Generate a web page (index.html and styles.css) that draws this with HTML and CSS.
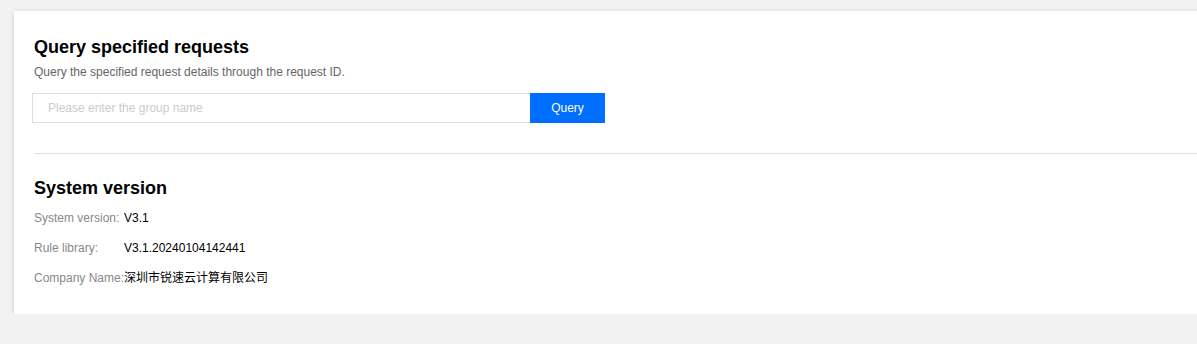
FILE: index.html
```html
<!DOCTYPE html>
<html lang="en">
<head>
    <meta name="viewport" content="width=device-width, initial-scale=1.0">
    <title>System Info</title>
    <link rel="stylesheet" href="styles.css">
</head>
<body>
    <div class="card">
        <div class="section query-section">
            <h2 class="title">Query specified requests</h2>
            <p class="desc">Query the specified request details through the request ID.</p>
            <div class="search">
                <input type="text" class="search-input" placeholder="Please enter the group name">
                <button class="search-btn">Query</button>
            </div>
        </div>
        <div class="section version-section">
            <h2 class="title">System version</h2>
            <div class="info-row">
                <span class="label">System version:</span>
                <span class="value">V3.1</span>
            </div>
            <div class="info-row">
                <span class="label">Rule library:</span>
                <span class="value">V3.1.20240104142441</span>
            </div>
            <div class="info-row">
                <span class="label">Company Name:</span>
                <span class="value">深圳市锐速云计算有限公司</span>
            </div>
        </div>
    </div>
</body>
</html>
```

FILE: styles.css
```css
body {
    margin: 0;
    padding: 11px 0 0 14px;
    background-color: #f2f2f2;
    font-family: "Liberation Sans", Arial, "Noto Sans CJK SC", sans-serif;
    color: #000;
    overflow: hidden;
}
.card {
    background: #fff;
    margin-right: -40px;
    padding: 21px 20px 21px 20px;
    box-shadow: 0 1px 5px rgba(0, 0, 0, 0.14);
}
.title {
    margin: 0;
    font-size: 18px;
    line-height: 30px;
    font-weight: bold;
    color: #000;
}
.desc {
    margin: 0 0 11px 0;
    font-size: 12px;
    line-height: 20px;
    color: #666;
}
.query-section {
    padding-bottom: 30px;
    border-bottom: 1px solid #e0e0e0;
}
.search {
    display: flex;
    margin-left: -2px;
}
.search-input {
    width: 498px;
    height: 30px;
    box-sizing: border-box;
    border: 1px solid #ddd;
    border-right: none;
    padding: 0 15px;
    font-family: inherit;
    font-size: 12px;
    outline: none;
}
.search-input::placeholder {
    color: #ccc;
}
.search-btn {
    width: 75px;
    height: 30px;
    border: none;
    background: #006eff;
    color: #fff;
    font-family: inherit;
    font-size: 12px;
    cursor: pointer;
}
.version-section {
    padding-top: 19px;
}
.info-row {
    display: flex;
    font-size: 12px;
    line-height: 30px;
}
.label {
    min-width: 90px;
    color: #888;
}
.value {
    color: #000;
}
```
